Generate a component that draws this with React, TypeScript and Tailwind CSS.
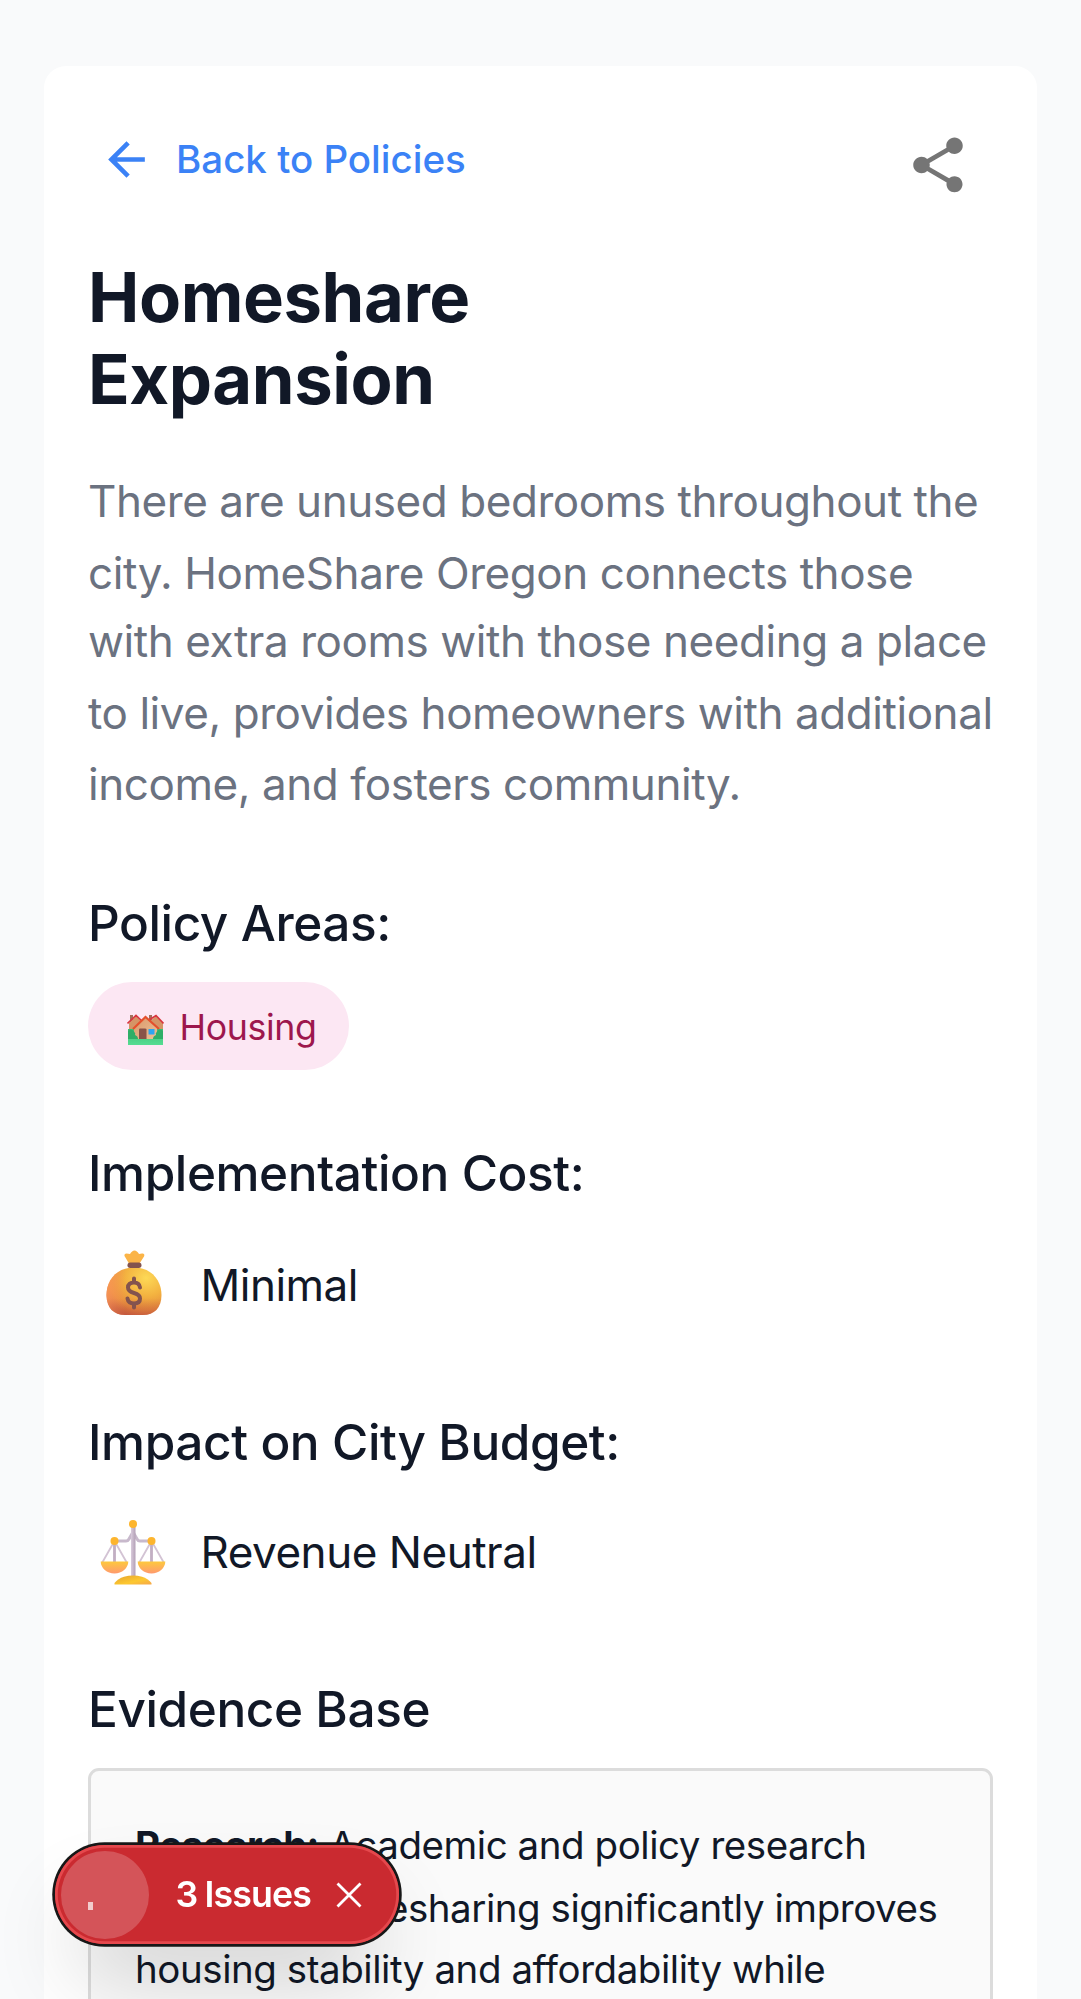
import React from "react";

const heading = "text-[49.5px] leading-[79px] font-medium tracking-[-0.41px]";

function Houses() {
  return (
    <svg viewBox="0 0 37 31" className="h-[31px] w-[37px] shrink-0">
      <defs>
        <linearGradient id="wall" x1="0" y1="0" x2="1" y2="1"><stop stopColor="#d9976a" /><stop offset="1" stopColor="#edc196" /></linearGradient>
        <linearGradient id="grass" x1="0" y1="0" x2="0" y2="1"><stop stopColor="#3fbf74" /><stop offset="1" stopColor="#55dd92" /></linearGradient>
      </defs>
      <path d="M3 1h3v7H3zM22 1h3v7h-3z" fill="#a2705a" />
      <path d="M2 9l7-7 7 7v13H2zM21 9l8-7 7 7v12H21z" fill="#d59466" />
      <path d="M.5 9.500 9 1.500l7 6.500M22 6l7-4.500L36.500 9.500" fill="none" stroke="#d8363e" strokeWidth="1.700" />
      <path d="M1 15h35v16H1z" fill="url(#grass)" />
      <path d="M7 13 18 3l12 10v12H7z" fill="url(#wall)" />
      <path d="M6 15 18.500 3 32 15" fill="none" stroke="#e4502c" strokeWidth="2.200" />
      <path d="M12 15.500q0-1 1-1h5q1.500 0 1.500 1V25H12z" fill="#895349" />
      <path d="M21.500 15h6v5.500h-6z" fill="#2da5f2" />
      <path d="M1 17q3-3 6 .5 2 2 1 3.500 3 1 3 4H1zM36 17q-4-3-6 .5-2 2-1 3.500-3 1-3 4h10z" fill="#2fae67" />
    </svg>
  );
}

function MoneyBag() {
  return (
    <svg viewBox="0 0 66 66" className="h-[66px] w-[66px]">
      <defs>
        <radialGradient id="bag" cx=".72" cy=".22" r=".85"><stop stopColor="#fdd956" /><stop offset=".45" stopColor="#f3b240" /><stop offset=".8" stopColor="#e58b3d" /><stop offset="1" stopColor="#c9603f" /></radialGradient>
        <linearGradient id="bagEdge" x1="0" y1="0" x2="1" y2="0"><stop stopColor="#ff9c5a" stopOpacity=".8" /><stop offset=".35" stopColor="#ff9c5a" stopOpacity="0" /></linearGradient>
        <linearGradient id="bagFloor" x1="0" y1="0" x2="0" y2="1"><stop offset=".65" stopColor="#c0513c" stopOpacity="0" /><stop offset="1" stopColor="#c0513c" stopOpacity=".5" /></linearGradient>
      </defs>
      <path d="M33 17.500C51 17.500 60.500 31 60.500 45 60.500 58 53 65 42 65H24C13 65 5.500 58 5.500 45 5.500 31 15 17.500 33 17.500z" fill="url(#bag)" />
      <path d="M33 17.500C51 17.500 60.500 31 60.500 45 60.500 58 53 65 42 65H24C13 65 5.500 58 5.500 45 5.500 31 15 17.500 33 17.500z" fill="url(#bagEdge)" />
      <path d="M33 17.500C51 17.500 60.500 31 60.500 45 60.500 58 53 65 42 65H24C13 65 5.500 58 5.500 45 5.500 31 15 17.500 33 17.500z" fill="url(#bagFloor)" />
      <path d="M28 13.500 23.500 6q-.5-2.500 2-2.500 2 0 3.500.5 2-3.500 4.500-3.500T38 4q2-.8 4-.5 2 .5 1 3L38.500 13.500z" fill="#fbb447" />
      <rect x="26.500" y="12.500" width="14" height="5.500" rx="2.700" fill="#83534e" />
      <path d="M39 37.500c-.5-3-2.500-5-6-5-3.800 0-6 2-6 5 0 7.500 12 3.500 12 11 0 3.300-2.300 5-6 5s-6-2-6.500-5M33 28.500v4M33 53.500v4" fill="none" stroke="#83534e" strokeWidth="4" strokeLinecap="round" />
    </svg>
  );
}

function Scales() {
  return (
    <svg viewBox="0 0 66 66" className="h-[66px] w-[66px]">
      <defs>
        <linearGradient id="pan" x1="0" y1="0" x2="0" y2="1"><stop stopColor="#fdc93d" /><stop offset="1" stopColor="#ff9a6e" /></linearGradient>
        <linearGradient id="base" x1="0" y1="0" x2="1" y2="1"><stop stopColor="#e5a32e" /><stop offset=".6" stopColor="#fdc830" /><stop offset="1" stopColor="#f5a64a" /></linearGradient>
        <linearGradient id="post"><stop stopColor="#d9cbdc" /><stop offset="1" stopColor="#b3a0b6" /></linearGradient>
      </defs>
      <path d="M14.500 22 2 44M14.500 22 27 44M51.500 22 39 44M51.500 22 64 44" stroke="#d3c3d4" strokeWidth="1.800" fill="none" />
      <path d="M14.500 22v21M51.500 22v21" stroke="#c2afc3" strokeWidth="2.800" />
      <path d="M15 22h11q2 0 3-2l4-7 4 7q1 2 3 2h11" fill="none" stroke="#c8b9cc" strokeWidth="3" />
      <path d="M31 7h4.500v51H31z" fill="url(#post)" />
      <circle cx="33" cy="5" r="4" fill="#fdb52e" /><circle cx="14.500" cy="22" r="4" fill="#fdb52e" /><circle cx="51.500" cy="22" r="4" fill="#fdb52e" />
      <path d="M.7 42.500h27.600C28.300 49 22 54.500 14.500 54.500S.7 49 .7 42.500zM37.700 42.500h27.600C65.300 49 59 54.500 51.500 54.500s-13.800-5.500-13.800-12z" fill="url(#pan)" />
      <path d="M14.500 65.500V64Q18 59.500 24 57.800q9-2.500 18 0 6 1.700 9.500 6.200v1.500z" fill="url(#base)" />
    </svg>
  );
}

function IssuesBadge() {
  return (
    <div className="fixed bottom-[55px] left-[55px] flex h-[99px] w-[344px] items-center rounded-full bg-[#ca2a30] text-white shadow-[0_0_0_2.75px_#171717,inset_0_0_0_2.75px_#e5484d,0_44px_88px_-22px_rgba(0,0,0,0.24)]">
      <div className="ml-[5.500px] h-[88px] w-[88px] rounded-full bg-white/20 pt-[51px] pl-[27px]">
        <div className="h-[8px] w-[5px] bg-white/70" />
      </div>
      <div className="ml-[27px] flex gap-[7px] text-[35.75px] leading-none font-semibold tracking-[-0.85px] whitespace-nowrap">
        <span>3</span><span>Issues</span>
      </div>
      <svg viewBox="0 0 26 26" className="ml-[25px] h-[26px] w-[26px]" fill="none" stroke="white" strokeWidth="2.800" strokeLinecap="butt">
        <path d="M1.500 1.500 24.500 24.500M24.500 1.500 1.500 24.500" />
      </svg>
    </div>
  );
}

export default function App() {
  return (
    <div className="h-[1999px] overflow-hidden bg-[#f9fafb] px-[44px] pt-[66px] font-['Inter',sans-serif] text-[#111827]">
      <main className="h-[2200px] rounded-[22px] bg-white p-[44px]">
        <header className="flex h-[146px] items-start justify-between">
          <button className="flex h-[99px] items-center gap-[22px] pl-[11px] text-[38.5px] font-medium text-[#3b82f6]">
            <svg viewBox="0 0 24 24" className="h-[55px] w-[55px]" fill="currentColor"><path d="M20 11H7.830l5.590-5.590L12 4l-8 8 8 8 1.410-1.410L7.830 13H20z" /></svg>
            Back to Policies
          </button>
          <button className="p-[22px] text-[#757575]">
            <svg viewBox="0 0 24 24" className="h-[66px] w-[66px]" fill="currentColor"><path d="M18 16.080c-.76 0-1.440.3-1.960.77L8.910 12.700c.05-.23.09-.46.09-.7s-.04-.47-.09-.7l7.050-4.110c.54.5 1.250.81 2.040.81 1.660 0 3-1.340 3-3s-1.340-3-3-3-3 1.340-3 3c0 .24.04.47.09.7L8.040 9.810C7.500 9.310 6.790 9 6 9c-1.660 0-3 1.340-3 3s1.340 3 3 3c.79 0 1.500-.31 2.040-.81l7.120 4.160c-.05.21-.08.43-.08.65 0 1.610 1.310 2.920 2.920 2.920s2.920-1.310 2.920-2.920-1.310-2.920-2.920-2.920" /></svg>
          </button>
        </header>
        <h1 className="text-[68.75px] leading-[82px] font-bold tracking-[-0.43px]">Homeshare<br />Expansion</h1>
        <p className="mt-[46px] flex flex-col text-[44px] leading-[70px] tracking-[-0.44px] whitespace-nowrap text-[#6b7280]">
          <span>There are unused bedrooms throughout the </span>
          <span className="mt-[2px]">city. HomeShare Oregon connects those </span>
          <span className="-mt-[2px]">with extra rooms with those needing a place </span>
          <span className="mt-[2px]">to live, provides homeowners with additional </span>
          <span className="mt-[1px]">income, and fosters community.</span>
        </p>
        <h2 className={`mt-[65px] ${heading}`}>Policy Areas:</h2>
        <div className="mt-[19px] flex h-[88px] w-[261px] items-center rounded-full bg-[#fce7f3] pl-[39px] text-[35.75px] tracking-[-0.4px] text-[#9d174d]">
          <span className="pt-[7px]"><Houses /></span><span className="ml-[15.500px] pt-[3px]">Housing</span>
        </div>
        <h2 className={`mt-[64px] ${heading}`}>Implementation Cost:</h2>
        <div className="mt-[37px] flex h-[66px] items-center pl-[13px] text-[44px] tracking-[-0.5px]"><MoneyBag /><span className="ml-[33.500px] pt-[4px]">Minimal</span></div>
        <h2 className={`mt-[87px] ${heading}`}>Impact on City Budget:</h2>
        <div className="mt-[37px] flex h-[66px] items-center pl-[12px] text-[44px] tracking-[-0.47px]"><Scales /><span className="ml-[34.500px]">Revenue Neutral</span></div>
        <h2 className={`mt-[85px] ${heading}`}>Evidence Base</h2>
        <section className="mt-[19px] flex h-[400px] flex-col rounded-[11px] border-[3px] border-[#dcdcdc] bg-[#fafafa] px-[44px] pt-[43px] text-[38.5px] leading-[62px] tracking-[-0.45px] whitespace-nowrap">
          <span><strong className="tracking-[-0.6px]">Research:</strong> Academic and policy research </span>
          <span className="mt-[1px]"><span className="tracking-[-0.8px]">finds that </span>homesharing significantly improves </span>
          <span className="-mt-[1px]">housing stability and affordability while</span>
        </section>
      </main>
      <IssuesBadge />
    </div>
  );
}
